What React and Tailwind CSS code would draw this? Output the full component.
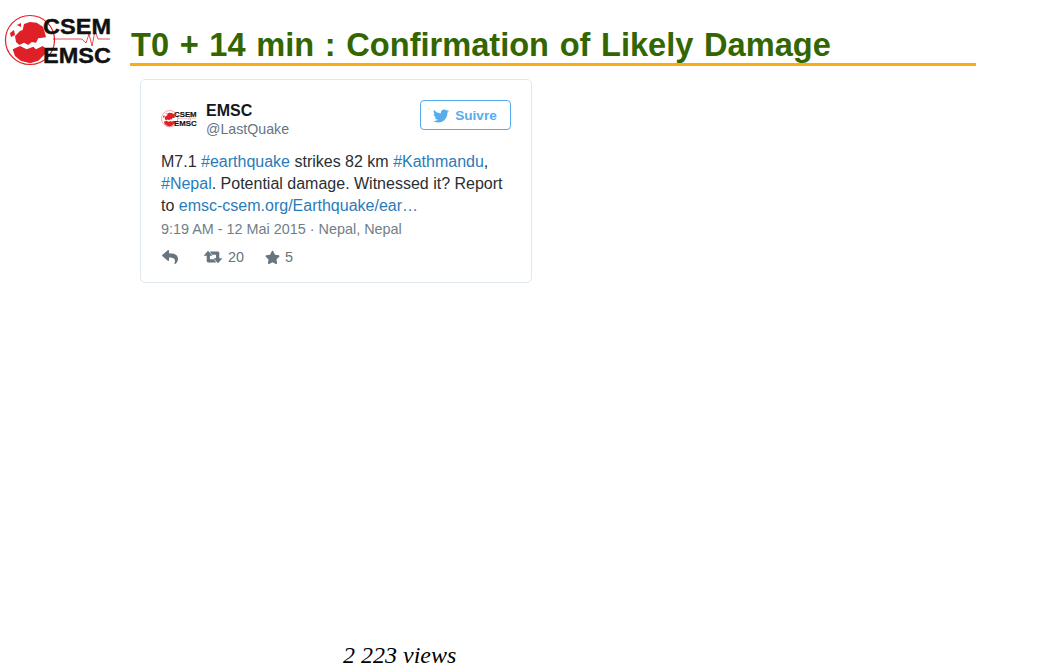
import React from 'react';
import { FaTwitter, FaReply, FaStar } from 'react-icons/fa';

const sans = { fontFamily: '"Liberation Sans", Arial, sans-serif' };

// CSEM / EMSC logo: red globe, seismic trace and the two names
const Logo = ({ className }) => (
  <svg viewBox="0 0 108 56" className={className}>
    <circle cx="26" cy="27" r="24.5" fill="#fff" stroke="#e02027" strokeWidth="1.2" />
    {/* Europe */}
    <path
      d="M11 23 L16 18 L18.7 17 L20 11 L26 9 L32.7 9.7 L39 13.7 L41 20.3 L42 24.3 L34.3 25.3 L32 29.7 L27.7 29 L24.3 32 L20 29.7 L15.3 32 L12 29 Z"
      fill="#e02027"
    />
    {/* Africa */}
    <path
      d="M8.7 36.3 L16 33 L22.7 36.3 L29.3 33.7 L32 36.3 L38.7 33 L42.7 36.3 L41 41 L34.3 47.7 L26 50.3 L16.7 47.7 L11 43 Z"
      fill="#e02027"
    />
    <path d="M6 20 L10 17 L11 22 L7 24 Z M13 12 L17 10 L17 14 Z" fill="#e02027" />
    <path
      d="M49 26 L78 26 L82 30 L85 21 L88 33 L91 18 L94 26 L106 26"
      fill="none"
      stroke="#e02027"
      strokeWidth="0.8"
    />
    <text x="39" y="20.5" fontFamily="Liberation Sans" fontWeight="700" fontSize="22" textLength="68" lengthAdjust="spacingAndGlyphs" fill="#111" stroke="#111" strokeWidth="0.4">
      CSEM
    </text>
    <text x="39" y="50" fontFamily="Liberation Sans" fontWeight="700" fontSize="22" textLength="68" lengthAdjust="spacingAndGlyphs" fill="#111" stroke="#111" strokeWidth="0.4">
      EMSC
    </text>
  </svg>
);

const RetweetIcon = ({ className }) => (
  <svg viewBox="0 0 20 14" className={className} fill="currentColor">
    <path d="M4.5 0 L9.5 5.5 H6.6 V9.6 H11 L13.6 13 H4.6 C3.6 13 3 12.4 3 11.4 V5.5 H-0.5 Z" />
    <path d="M15.5 14 L10.5 8.5 H13.4 V4.4 H9 L6.4 1 H15.4 C16.4 1 17 1.6 17 2.6 V8.5 H20.5 Z" />
  </svg>
);

const Link = ({ children }) => <span className="text-[#2b7bb9]">{children}</span>;

export default function App() {
  return (
    <div className="flex h-[668px] w-[1040px] flex-col overflow-hidden bg-white" style={sans}>
      <header className="flex items-start pl-[4px] pt-[13px]">
        <Logo className="h-[56px] w-[108px] shrink-0" />
        <div className="ml-[18px] mt-[14px] w-[846px] border-b-[3px] border-[#f8ad16]">
          <h1 className="pl-[1px] text-[32.6px] font-bold leading-[36px] [word-spacing:1.6px] text-[#336600]">
            T0 + 14 min : Confirmation of Likely Damage
          </h1>
        </div>
      </header>

      <article className="ml-[140px] mt-[10px] h-[204px] w-[392px] rounded-[5px] border border-[#dfe8ee] px-[20px] pt-[20px]">
        <div className="flex items-start justify-between">
          <div className="flex items-center">
            <Logo className="h-[36px] w-[36px]" />
            <div className="ml-[9px] pt-[1px]">
              <div className="text-[16px] font-bold leading-[20px] text-[#14171a]">EMSC</div>
              <div className="text-[14.2px] leading-[16px] text-[#66757f]">@LastQuake</div>
            </div>
          </div>
          <button className="flex h-[30px] w-[91px] items-center justify-center rounded-[4px] border border-[#55acee] pr-[1px] pt-[2px] text-[13.6px] font-bold text-[#55acee]">
            <FaTwitter className="mr-[6px] text-[16px]" />
            Suivre
          </button>
        </div>

        <p className="mt-[14px] text-[16px] leading-[22px] text-[#292f33]">
          M7.1 <Link>#earthquake</Link> strikes 82 km <Link>#Kathmandu</Link>,<br />
          <Link>#Nepal</Link>. Potential damage. Witnessed it? Report<br />
          to <Link>emsc-csem.org/Earthquake/ear…</Link>
        </p>

        <div className="mt-[3px] text-[14.4px] leading-[18px] text-[#707e88]">
          9:19 AM - 12 Mai 2015 · Nepal, Nepal
        </div>

        <div className="mt-[10px] flex items-center text-[14.4px] leading-[18px] text-[#66757f]">
          <FaReply className="ml-[1px] text-[16px]" />
          <RetweetIcon className="ml-[26px] h-[14px] w-[18px]" />
          <span className="ml-[6px]">20</span>
          <FaStar className="ml-[21px] text-[15px]" />
          <span className="ml-[5px]">5</span>
        </div>
      </article>

      <footer
        className="mt-auto pl-[343px] text-[24px] italic leading-[26px] text-black"
        style={{ fontFamily: '"Liberation Serif", "Times New Roman", serif' }}
      >
        2 223 views
      </footer>
    </div>
  );
}
